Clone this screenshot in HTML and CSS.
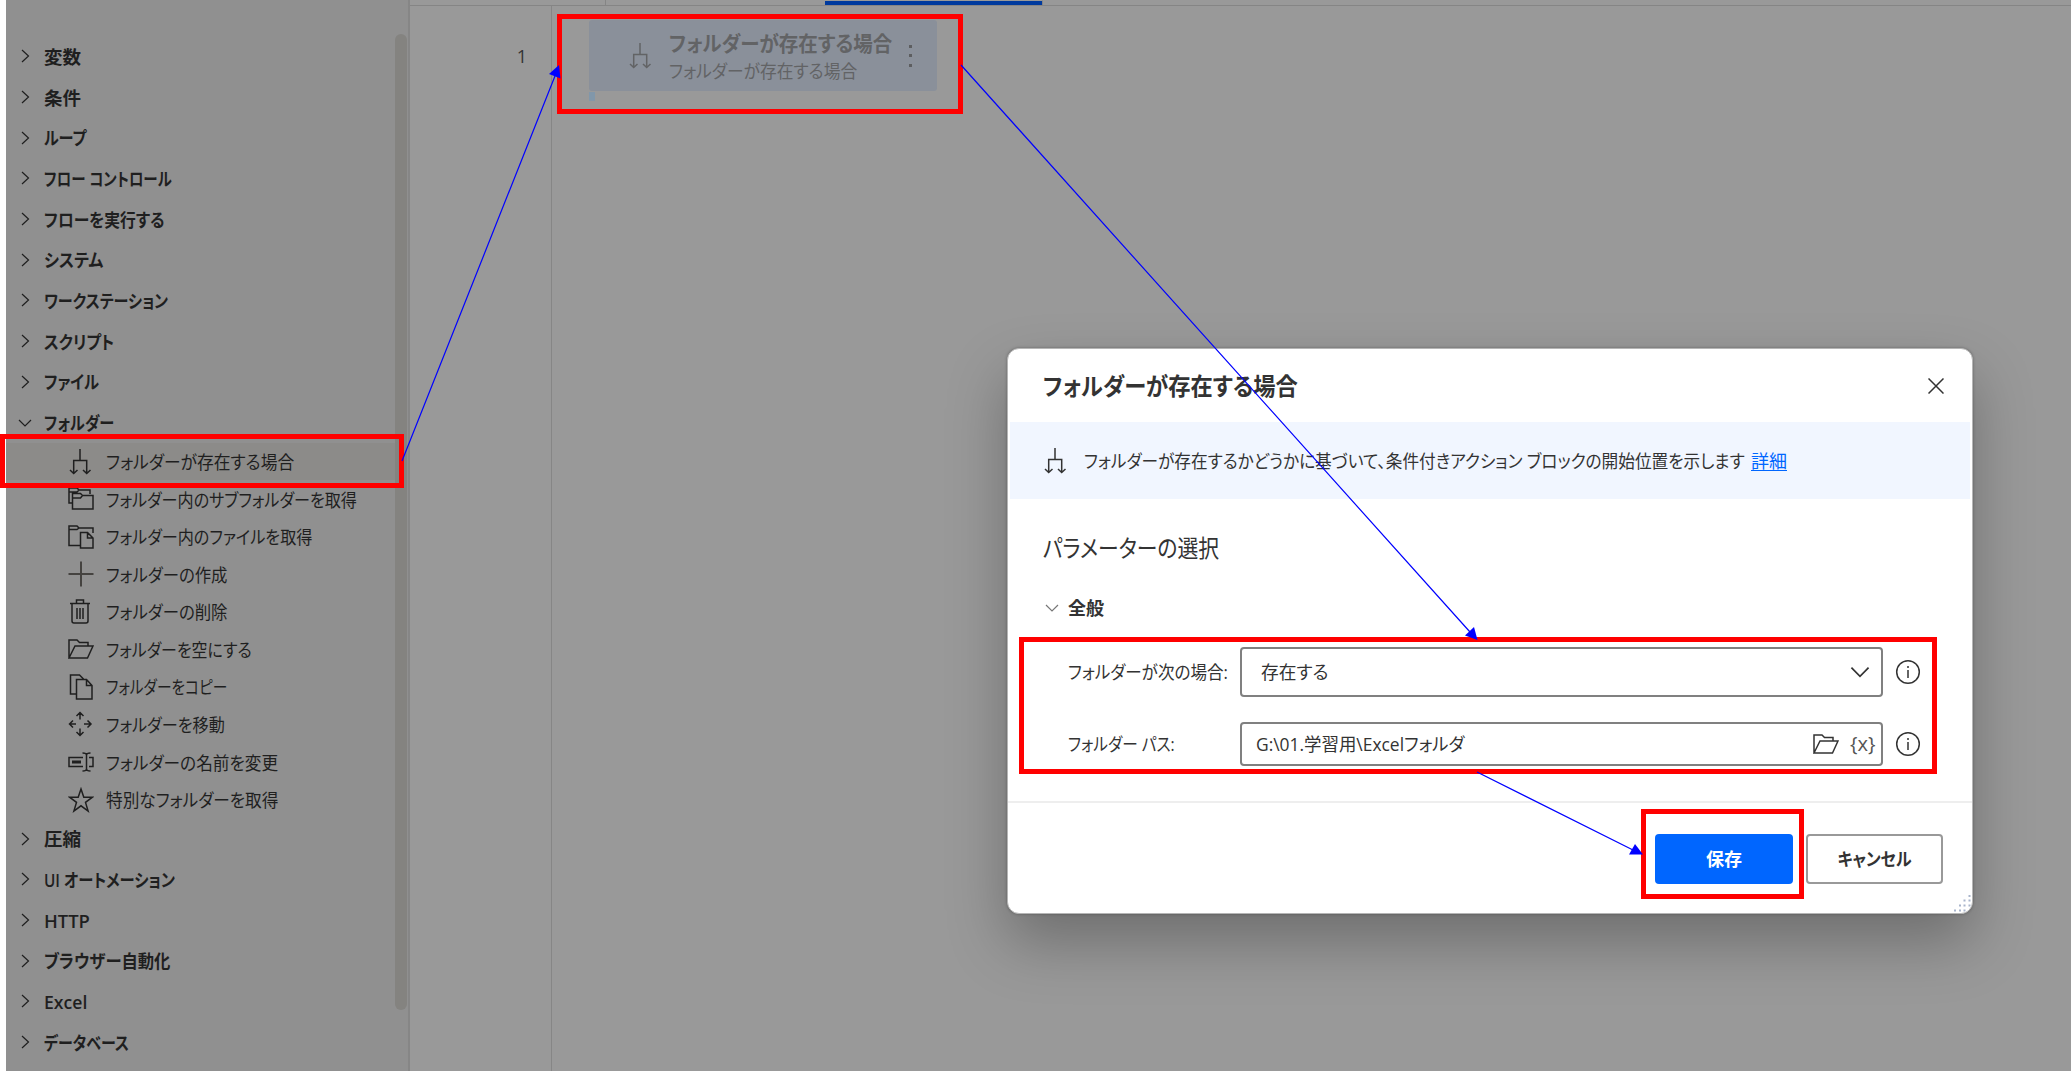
FILE: index.html
```html
<!DOCTYPE html>
<html lang="ja">
<head>
    <meta charset="UTF-8">
    <meta name="viewport" content="width=device-width, initial-scale=1.0">
    <title>フォルダーが存在する場合</title>
    <link rel="stylesheet" href="styles.css">
</head>
<body>
<svg class="symbols">
    <symbol id="right" viewBox="0 0 14 14"><path d="M4 1l6.500 6L4 13"/></symbol>
    <symbol id="down" viewBox="0 0 14 14"><path d="M1 4l6 6 6-6"/></symbol>
    <symbol id="branch" viewBox="0 0 26 26"><path d="M12 0v11.500M5.700 24V11.500h13V24M2 21l3.700 3.500L9.500 21M15 21l3.700 3.500L22.500 21"/></symbol>
    <symbol id="folders" viewBox="0 0 26 26"><path d="M4 17H1V2h8l2 2h11v4M1 6h8l2-2M4.500 23V7.500h8l2 2H25V23zM4.500 12h8l2-2.500"/></symbol>
    <symbol id="files" viewBox="0 0 26 26"><path d="M12 21.500H1V2h8l2 2h14v5M1 5.500h8l2-1.500M12.500 8.500h7l5.500 5.500v10H12.500zM19.500 8.500V14H25"/></symbol>
    <symbol id="plus" viewBox="0 0 26 26"><path d="M13 .5v25M.5 13h25"/></symbol>
    <symbol id="trash" viewBox="0 0 26 26"><path d="M2 4.500h20M8.500 4.500V1h7v3.500M4 4.500V22q0 2 2 2h12q2 0 2-2V4.500M9 9v11M12 9v11M15 9v11"/></symbol>
    <symbol id="open" viewBox="0 0 26 26"><path d="M1 22V4h8l2.500 2.500H20V10M1 22L7 10h18l-5.500 12z"/></symbol>
    <symbol id="copy" viewBox="0 0 26 26"><path d="M8.500 20H2.500V1h9l4 4M8.500 5.500h10l5.500 6V25H8.500zM18.500 5.500v6H24"/></symbol>
    <symbol id="move" viewBox="0 0 26 26"><path d="M12 8.500V2M8.500 5L12 1.500 15.500 5M12 17.500V24M8.500 21l3.500 3.500 3.500-3.500M8 13H1.500M5 9.500L1.500 13 5 16.500M16 13h6.500M19.500 9.500L23 13l-3.500 3.500"/></symbol>
    <symbol id="rename" viewBox="0 0 26 26"><path d="M15 8.500H1v9h14M21 8.500h4v9h-4M14.500 4q4 0 4 2v14q0 2-4 2M22.500 4q-4 0-4 2M22.500 22q-4 0-4-2"/><path class="thick" d="M4 13h9"/></symbol>
    <symbol id="star" viewBox="0 0 26 26"><path d="M13 2l2.800 8.200h8.700l-7 5.200 2.600 8.600-7.100-5.200L5.900 24l2.600-8.600-7-5.200h8.700z"/></symbol>
    <symbol id="info" viewBox="0 0 26 26"><circle cx="13" cy="13" r="11.300"/><path d="M13 11v8M13 7v2"/></symbol>
    <symbol id="close" viewBox="0 0 16 16"><path d="M.5.5l15 15M15.500.5l-15 15"/></symbol>
</svg>

<main class="designer">
    <nav class="actions"></nav>
    <div class="scrollbar"><div class="thumb"></div></div>
    <section class="flow">
        <header class="tabs">
            <div class="tab"></div>
            <div class="tab"></div>
            <div class="tab active"></div>
        </header>
        <div class="steps">
            <div class="gutter">1</div>
            <div class="canvas">
                <div class="step">
                    <svg class="icon"><use href="#branch"/></svg>
                    <div class="step-text">
                        <b><span data-width="223">フォルダーが存在する場合</span></b>
                        <small><span data-width="188">フォルダーが存在する場合</span></small>
                    </div>
                    <div class="dots"><i></i><i></i><i></i></div>
                </div>
                <div class="marker"></div>
            </div>
        </div>
    </section>
</main>

<div class="dialog">
    <header class="dialog-title">
        <h1><span data-width="255">フォルダーが存在する場合</span></h1>
        <svg class="close"><use href="#close"/></svg>
    </header>
    <div class="summary">
        <svg class="icon"><use href="#branch"/></svg>
        <p><span data-width="661">フォルダーが存在するかどうかに基づいて、条件付きアクション ブロックの開始位置を示します</span></p>
        <a href="#">詳細</a>
    </div>
    <div class="params">
        <h2><span data-width="176">パラメーターの選択</span></h2>
        <h3><svg class="chevron"><use href="#down"/></svg>全般</h3>
        <div class="field">
            <label><span data-width="160">フォルダーが次の場合:</span></label>
            <div class="box select"><span data-width="67">存在する</span><svg class="caret"><use href="#down"/></svg></div>
            <svg class="icon"><use href="#info"/></svg>
        </div>
        <div class="field">
            <label><span data-width="107">フォルダー パス:</span></label>
            <div class="box"><span data-width="208">G:\01.学習用\Excelフォルダ</span><svg class="icon"><use href="#open"/></svg><em>{x}</em></div>
            <svg class="icon"><use href="#info"/></svg>
        </div>
    </div>
    <footer class="buttons">
        <button class="save">保存</button>
        <button><span data-width="74">キャンセル</span></button>
    </footer>
    <svg class="grip" viewBox="0 0 18 18"><path d="M15.500 1h2M10.500 5.500h2M15.500 5.500h2M6 10.500h2M10.500 10.500h2M15.500 10.500h2M1 15.500h2M6 15.500h2M10.500 15.500h2"/></svg>
</div>

<!-- tutorial marks -->
<svg class="marks" viewBox="0 0 2071 1071">
    <rect x="2.500" y="436.500" width="399" height="49"/>
    <rect x="559.500" y="16.500" width="401" height="95"/>
    <rect x="1021.500" y="639.500" width="913" height="132"/>
    <rect x="1643.500" y="811.500" width="158" height="85"/>
    <path d="M402 461L555 76M961 65l509 567M1477 772l156 78"/>
    <polygon points="559,65 549,74 560.500,78.500"/>
    <polygon points="1477.500,640 1465,635.500 1474,627"/>
    <polygon points="1643,854.500 1629,854.500 1635,844"/>
</svg>

<script>
    (function() {
        // label, label width
        const before = [
            ['変数', 37], ['条件', 37], ['ループ', 43], ['フロー コントロール', 128],
            ['フローを実行する', 121], ['システム', 59], ['ワークステーション', 124],
            ['スクリプト', 70], ['ファイル', 55], ['フォルダー', 70, true]
        ];
        // icon, label, label width
        const folder = [
            ['branch', 'フォルダーが存在する場合', 188],
            ['folders', 'フォルダー内のサブフォルダーを取得', 251],
            ['files', 'フォルダー内のファイルを取得', 206],
            ['plus', 'フォルダーの作成', 121],
            ['trash', 'フォルダーの削除', 121],
            ['open', 'フォルダーを空にする', 146],
            ['copy', 'フォルダーをコピー', 121],
            ['move', 'フォルダーを移動', 119],
            ['rename', 'フォルダーの名前を変更', 172],
            ['star', '特別なフォルダーを取得', 172]
        ];
        const after = [
            ['圧縮', 37], ['UI オートメーション', 131], ['HTTP', 46],
            ['ブラウザー自動化', 126], ['Excel', 43], ['データベース', 85]
        ];

        function group([label, width, open]) {
            return `<div class="group"><svg class="chevron"><use href="#${open ? 'down' : 'right'}"/></svg><span data-width="${width}">${label}</span></div>`;
        }

        function action([icon, label, width], idx) {
            return `<div class="action${idx === 0 ? ' selected' : ''}"><svg class="icon ${icon}"><use href="#${icon}"/></svg><span data-width="${width}">${label}</span></div>`;
        }

        document.querySelector('.actions').innerHTML =
            before.map(group).join('') + folder.map(action).join('') + after.map(group).join('');

        // Condense labels to their width
        document.querySelectorAll('[data-width]').forEach(el => {
            el.style.transform = `scaleX(${el.dataset.width / el.offsetWidth})`;
        });
    })();
</script>
</body>
</html>
```
FILE: styles.css
```css
* {
    margin: 0; padding: 0; box-sizing: border-box;
}

body {
    width: 2071px;
    height: 1071px;
    overflow: hidden;
    position: relative;
    background: #999;
    color: #333;
    font-family: "Open Sans", "Noto Sans CJK JP", sans-serif;
    font-size: 18px;
    font-feature-settings: "palt";
    line-height: 1;
}

svg {
    fill: none;
    stroke: currentColor;
    stroke-width: 1.5;
    flex: none;
}

.symbols {
    display: none;
}

.thick {
    stroke-width: 3;
}

.icon {
    width: 26px;
    height: 26px;
}

.chevron {
    width: 14px;
    height: 14px;
    stroke-width: 1.2;
}

[data-width] {
    display: inline-block;
    white-space: nowrap;
    transform-origin: 0 50%;
}

.designer {
    display: flex;
    height: 100%;
    border-left: 6px solid #fff;
}

.actions {
    width: 389px;
    padding-top: 36px;
    background: #909090;
    color: #1f1f1f;
}

.group {
    display: flex;
    align-items: center;
    gap: 12px;
    height: 40.7px;
    padding-left: 12px;
    font-weight: 600;
}

.action {
    display: flex;
    align-items: center;
    gap: 12px;
    height: 37.55px;
    padding-left: 62px;
}

.group span, .action span {
    padding-top: 1px;
}

.selected {
    background: #8c8b89;
}

.plus {
    stroke: #454340;
    stroke-width: 2;
}

.scrollbar {
    width: 15px;
    padding-top: 34px;
    background: #909090;
    border-right: 2px solid #868686;
}

.thumb {
    width: 12px;
    height: 976px;
    border-radius: 6px;
    background: #848380;
}

.flow {
    flex: 1;
    display: flex;
    flex-direction: column;
}

.tabs {
    display: flex;
    height: 6px;
    border-bottom: 1px solid #858585;
}

.tab {
    width: 219px;
    border-right: 1px solid #858585;
}

.tab:first-child {
    width: 196px;
}

.tab:nth-child(2) {
    border-right: none;
}

.active {
    width: 218px;
    border-top: 1px solid #999;
    background: #003a9e;
}

.steps {
    flex: 1;
    display: flex;
}

.gutter {
    width: 142px;
    padding: 41px 24px 0 0;
    border-right: 1px solid #868686;
    text-align: right;
}

.canvas {
    padding: 14px 0 0 37px;
}

.step {
    display: flex;
    align-items: center;
    width: 348px;
    height: 71px;
    padding-left: 39px;
    border-radius: 3px;
    background: #8a909a;
    color: #626365;
}

.step-text {
    width: 237px;
    margin-left: 15px;
    padding-top: 2px;
}

.step-text b, .step-text small {
    display: block;
    font-size: 21px;
    font-weight: 600;
    line-height: 29px;
}

.step-text small {
    font-size: 18px;
    font-weight: 400;
    line-height: 26px;
}

.dots i {
    display: block;
    width: 3px;
    height: 3px;
    margin: 6.5px 3px;
    background: #5d5e60;
}

.marker {
    width: 6px;
    height: 9px;
    margin-top: 1px;
    background: #8197aa;
}

/* dialog lies over the designer */
.dialog {
    position: absolute;
    left: 1007px;
    top: 348px;
    width: 966px;
    height: 566px;
    border-radius: 12px;
    border: 1px solid #b5b5b5;
    background: #fff;
    box-shadow: 0 0 3px rgba(0, 0, 0, .3), 0 28px 60px rgba(0, 0, 0, .28);
}

.dialog-title {
    display: flex;
    align-items: center;
    justify-content: space-between;
    height: 73px;
    padding: 0 28px 0 35px;
}

h1 {
    font-size: 24px;
    font-weight: 600;
}

.close {
    width: 16px;
    height: 16px;
}

.summary {
    display: flex;
    align-items: center;
    height: 77px;
    margin: 0 2px;
    padding-left: 33px;
    background: #f1f6ff;
}

.summary p {
    width: 667px;
    margin-left: 15px;
}

.summary a {
    color: #06f;
    text-underline-offset: 2px;
}

.params {
    height: 304px;
    padding: 37px 0 0 35px;
    border-bottom: 2px solid #eee;
}

h2 {
    font-size: 24px;
    font-weight: 400;
    margin-bottom: 39px;
}

h3 {
    display: flex;
    align-items: center;
    gap: 9px;
    padding-left: 2px;
    font-size: 18px;
    font-weight: 600;
    margin-bottom: 24px;
}

h3 .chevron {
    color: #777;
}

.field {
    display: flex;
    align-items: center;
    height: 61px;
    padding-left: 25px;
}

.field + .field {
    height: 60px;
    margin-top: 12px;
}

label {
    width: 172px;
}

.box {
    display: flex;
    align-items: center;
    justify-content: space-between;
    width: 643px;
    height: 44px;
    margin-right: 12px;
    padding: 0 4px 0 14px;
    border: 2px solid #808080;
    border-radius: 4px;
}

.select {
    height: 50px;
    padding: 0 11px 0 19px;
}

.box .icon {
    margin-left: auto;
}

.box em {
    width: 27px;
    margin-left: 11px;
    font-size: 20px;
    font-style: normal;
    color: #555;
}

.caret {
    width: 20px;
    height: 20px;
    stroke-width: 1.2;
}

.buttons {
    display: flex;
    justify-content: flex-end;
    gap: 13px;
    padding: 31px 29px 0 0;
}

button {
    width: 137px;
    height: 50px;
    border: 2px solid #999;
    border-radius: 4px;
    background: #fff;
    color: #333;
    font: inherit;
    font-weight: 600;
}

.buttons [data-width] {
    transform-origin: 50% 50%;
}

.save {
    width: 138px;
    border: none;
    background: #06f;
    color: #fff;
    font-weight: 700;
}

.grip {
    position: absolute;
    right: 1px;
    bottom: 0;
    width: 18px;
    height: 18px;
    stroke: #a9b5cc;
    stroke-width: 2;
}

.marks {
    position: absolute;
    left: 0;
    top: 0;
    width: 2071px;
    height: 1071px;
    stroke: none;
}

.marks rect {
    stroke: #f00;
    stroke-width: 5;
}

.marks path {
    stroke: #00f;
    stroke-width: 1.2;
}

.marks polygon {
    fill: #00f;
}
```
